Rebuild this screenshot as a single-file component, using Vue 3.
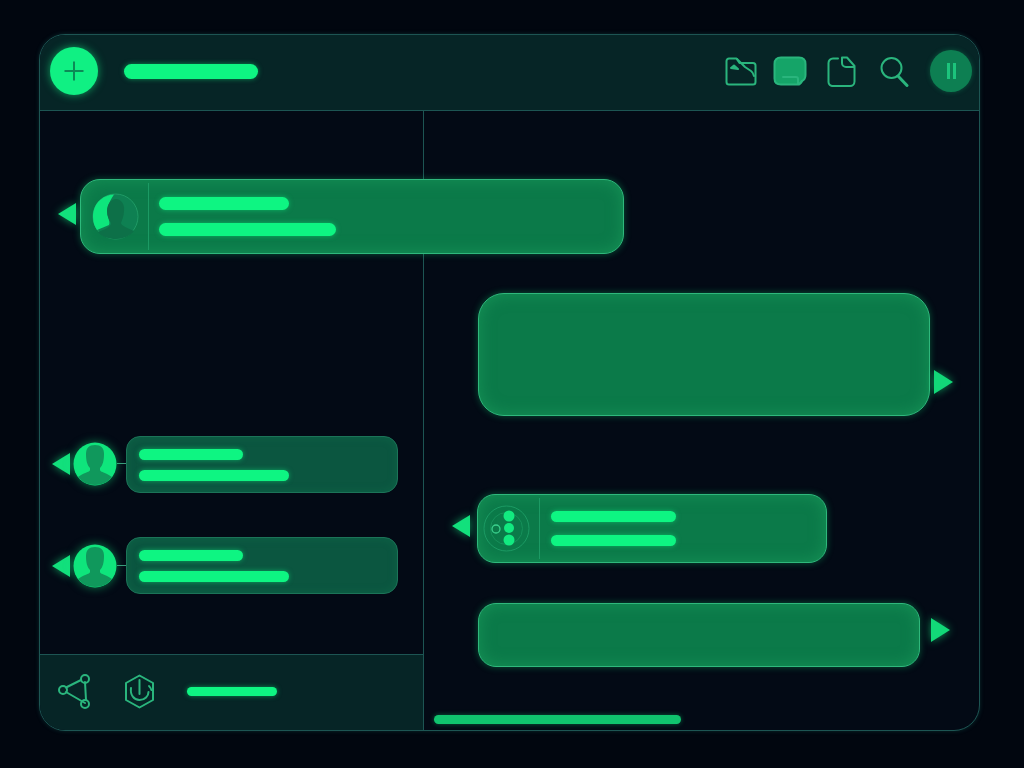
<script setup>
const people = [1, 2]
</script>

<template>
  <div class="page">
    <div class="frame">
      <header class="top">
        <button class="add">
          <svg width="22" height="22" viewBox="0 0 22 22"><path d="M11 1.500v19M1.500 11h19" class="plus" /></svg>
        </button>
        <span class="bar title"></span>
        <div class="tools">
          <svg class="ic" width="32" height="29" viewBox="0 0 32 29">
            <path d="M1.500 4a2.500 2.500 0 0 1 2.500-2.500h7.500l3 4.500H28a2.500 2.500 0 0 1 2.500 2.500V25a2.500 2.500 0 0 1-2.500 2.500H4A2.500 2.500 0 0 1 1.500 25z" />
            <path d="M12 2l8 8 6 4c1.500 1 2.500 3 3 5" />
            <path d="M6 11l3-2.500 4 3.500z" class="solid" />
          </svg>
          <svg class="ic" width="34" height="30" viewBox="0 0 34 30">
            <path d="M8 1.500h18c4 0 6.500 2.500 6.500 6.500v11c0 3-1 5-3.500 6l-3 3.500H8c-4 0-6.500-2-6.500-6V8C1.500 4 4 1.500 8 1.500z" class="fill" />
            <path d="M10 21h13c1.500 0 2 1 2 2v5M25 28c2 .5 3-.5 4-3" />
          </svg>
          <svg class="ic" width="29" height="31" viewBox="0 0 29 31">
            <path d="M11 2.500H6A4.500 4.500 0 0 0 1.500 7v19A4 4 0 0 0 6 30h17a4.500 4.500 0 0 0 4.500-4.500V10L20 1.500h-5" />
            <path d="M15 2v5a4 4 0 0 0 4 4h8" />
          </svg>
          <svg class="ic" width="29" height="31" viewBox="0 0 29 31">
            <circle cx="11.500" cy="12" r="10" />
            <path d="M18 20l9 9.500" class="thick" />
          </svg>
          <button class="pause"><i></i><i></i></button>
        </div>
      </header>

      <div class="body">
        <aside class="left">
          <div class="row first">
            <span class="arrow l up6"></span>
            <div class="bubble b1">
              <div class="cell c1">
                <svg width="47" height="47" viewBox="0 0 47 47">
                  <circle cx="23.500" cy="23.500" r="22.500" fill="#0e8052" stroke="#1f9a65" />
                  <path d="M22 1.500C10 2 1 11 1 24c0 6 2 10 4 13l12-5c1-2 0-5-1-8-2-6 0-14 6-22.500z" fill="#0ee67c" />
                  <path d="M15 18c0-7 4-12 9-12s9 5 8 12c0 5-2 9-3 12 0 3 7 5 13 8-4 5-11 8-18 8-7 0-14-2-18-7 7-3 13-5 13-9-2-3-4-7-4-12z" fill="#0d7048" />
                </svg>
              </div>
              <div class="lines l1">
                <span class="bar w130"></span>
                <span class="bar w177"></span>
              </div>
            </div>
          </div>

          <div v-for="n in people" :key="n" class="row second" :class="{ third: n === 2 }">
            <span class="arrow l small"></span>
            <svg class="person" width="44" height="44" viewBox="0 0 44 44">
              <circle cx="22" cy="22" r="21.500" fill="#0fe57c" />
              <path d="M13 12c0-6 3-9 9-9s9 3 9 9c0 6-1 11-4 14v2c0 2 7 3 12 7-4 5-10 8-17 8S9 40 5 35c5-4 12-5 12-7v-2c-3-3-4-8-4-14z" fill="#10985c" />
            </svg>
            <span class="tick"></span>
            <div class="bubble b2">
              <div class="lines l2">
                <span class="bar w104"></span>
                <span class="bar w150"></span>
              </div>
            </div>
          </div>

          <footer class="foot">
            <svg class="ic" width="33" height="35" viewBox="0 0 33 35">
              <path d="M8 13.500L23 6M8 18l19 11M27 8l1 18" />
              <circle cx="5" cy="16" r="4" />
              <circle cx="27" cy="5" r="4" />
              <circle cx="27" cy="30" r="4" />
            </svg>
            <svg class="ic hex" width="35" height="35" viewBox="0 0 35 35">
              <path d="M17.500 1.500L31 9v17L17.500 33.500 4 26V9z" />
              <path d="M17.500 6v14M9 14c-1 7 3 12 8.500 12s9-4 9-8" />
              <path d="M27 12l1.500 2M29 15l.5 1" />
            </svg>
            <span class="bar f"></span>
          </footer>
        </aside>

        <section class="right">
          <div class="row ra">
            <div class="bubble big"></div>
            <span class="arrow r a1"></span>
          </div>
          <div class="row rb">
            <span class="arrow l up5"></span>
            <div class="bubble b3">
              <div class="cell c3">
                <svg width="47" height="47" viewBox="0 0 47 47">
                  <circle cx="23.500" cy="23.500" r="22.500" fill="none" stroke="#1b9a63" />
                  <circle cx="23.500" cy="23.500" r="16" fill="none" stroke="#16905a" />
                  <circle cx="26" cy="11" r="5.500" fill="#12ea80" />
                  <circle cx="26" cy="23" r="5" fill="#12ea80" />
                  <circle cx="26" cy="35" r="5.500" fill="#12ea80" />
                  <circle cx="13" cy="24" r="4" fill="none" stroke="#3bd08d" stroke-width="1.300" />
                </svg>
              </div>
              <div class="lines l3">
                <span class="bar w125"></span>
                <span class="bar w125"></span>
              </div>
            </div>
          </div>
          <div class="row rc">
            <div class="bubble wide"></div>
            <span class="arrow r c"></span>
          </div>
          <span class="progress"></span>
        </section>
      </div>
    </div>
  </div>
</template>

<style>
html, body { margin: 0; background: #01060f; }
</style>

<style scoped>
.page {
  width: 1024px;
  height: 768px;
  padding: 34px 0 0 39px;
  box-sizing: border-box;
  background: #01060f;
  overflow: hidden;
}
.frame {
  width: 941px;
  height: 697px;
  box-sizing: border-box;
  border: 1px solid #1d5553;
  border-radius: 26px;
  background: #030a15;
  display: flex;
  flex-direction: column;
  box-shadow: 0 0 4px rgba(30, 110, 100, .35);
}
.top {
  height: 76px;
  flex: none;
  box-sizing: border-box;
  border-bottom: 1px solid #1d5553;
  border-radius: 25px 25px 0 0;
  background: #062526;
  display: flex;
  align-items: center;
  padding: 0 7px 3px 10px;
}
.add {
  width: 48px;
  height: 48px;
  padding: 0;
  border: 0;
  border-radius: 50%;
  background: #10f083;
  box-shadow: 0 0 9px rgba(16, 240, 131, .6);
  display: flex;
  align-items: center;
  justify-content: center;
}
.plus { stroke: #0c8a56; stroke-width: 2; fill: none; }
.bar {
  display: block;
  border-radius: 8px;
  background: #0ef582;
  box-shadow: 0 0 5px rgba(14, 245, 130, .5);
}
.title { width: 134px; height: 15px; margin-left: 26px; }
.tools {
  margin-left: auto;
  display: flex;
  align-items: center;
}
.ic { fill: none; stroke: #2ab57d; stroke-width: 2; stroke-linecap: round; stroke-linejoin: round; display: block; flex: none; }
.ic .solid { fill: #2ab57d; }
.ic .fill { fill: #15a468; }
.ic .thick { stroke-width: 3; }
.tools > svg:nth-child(2) { margin-left: 16px; }
.tools > svg:nth-child(3) { margin-left: 20px; }
.tools > svg:nth-child(4) { margin-left: 24px; }
.pause {
  width: 42px;
  height: 42px;
  margin-left: 21px;
  padding: 0;
  border: 0;
  border-radius: 50%;
  background: #0d7f52;
  box-shadow: 0 0 5px rgba(16, 180, 110, .35);
  display: flex;
  align-items: center;
  justify-content: center;
  gap: 3px;
}
.pause i { width: 3px; height: 16px; background: #1cc47c; }

.body { flex: 1; display: flex; min-height: 0; }
.left {
  width: 384px;
  flex: none;
  box-sizing: border-box;
  border-right: 1px solid #1d5553;
  display: flex;
  flex-direction: column;
}
.right { flex: 1; display: flex; flex-direction: column; }
.row { display: flex; align-items: center; flex: none; }

.arrow { display: block; flex: none; width: 0; height: 0; border-style: solid; border-color: transparent; filter: drop-shadow(0 0 4px rgba(16, 240, 131, .6)); }
.arrow.l { border-width: 11px 18px 11px 0; border-right-color: #12e07c; }
.arrow.r { border-width: 12px 0 12px 19px; border-left-color: #12d878; }
.up6 { margin-bottom: 6px; }
.up5 { margin-bottom: 5px; }

.bubble {
  box-sizing: border-box;
  flex: none;
  display: flex;
  align-items: center;
  border: 1px solid #2fb87c;
  background: #0b7a49;
  box-shadow: inset 0 0 16px rgba(34, 170, 100, .5), 0 0 7px rgba(16, 220, 120, .35);
}
.first { margin: 68px 0 0 18px; gap: 4px; }
.b1 { width: 544px; height: 75px; border-radius: 20px; padding-left: 11px; }
.cell { flex: none; display: flex; align-items: center; box-sizing: border-box; }
.c1 { width: 57px; height: 67px; border-right: 1px solid #1c9a64; margin-right: 10px; }
.lines { display: flex; flex-direction: column; }
.l1 { gap: 13px; }
.w130 { width: 130px; height: 13px; }
.w177 { width: 177px; height: 13px; }

.second { margin: 182px 0 0 12px; }
.second .arrow, .second .person, .second .tick { margin-bottom: 2px; }
.third { margin-top: 44px; }
.third .arrow, .third .person, .third .tick { margin-bottom: 0; }
.small { border-width: 11px 19px 11px 0; }
.person { margin-left: 3px; flex: none; filter: drop-shadow(0 0 5px rgba(16, 240, 131, .5)); }
.tick { width: 9px; height: 1px; background: #3a9a7a; flex: none; }
.b2 {
  width: 272px;
  height: 57px;
  border-radius: 14px;
  border-color: #1c7458;
  background: #0b5640;
  box-shadow: inset 0 0 10px rgba(20, 130, 85, .3);
  padding-left: 12px;
}
.l2 { gap: 10px; }
.w104 { width: 104px; height: 11px; }
.w150 { width: 150px; height: 11px; }

.foot {
  margin-top: auto;
  height: 76px;
  box-sizing: border-box;
  border-top: 1px solid #1d5553;
  border-radius: 0 0 0 25px;
  background: #062526;
  display: flex;
  align-items: center;
  padding: 0 0 2px 18px;
}
.hex { margin-left: 31px; }
.f { width: 90px; height: 9px; margin-left: 30px; }

.ra { margin: 182px 0 0 54px; gap: 4px; align-items: flex-end; }
.big { width: 452px; height: 123px; border-radius: 26px; }
.a1 { margin-bottom: 22px; }
.rb { margin: 78px 0 0 28px; gap: 7px; }
.b3 { width: 350px; height: 69px; border-radius: 18px; padding-left: 5px; }
.c3 { width: 57px; height: 61px; border-right: 1px solid #1c9a64; margin-right: 11px; }
.l3 { gap: 13px; }
.w125 { width: 125px; height: 11px; }
.rc { margin: 40px 0 0 54px; gap: 11px; }
.wide { width: 442px; height: 64px; border-radius: 18px; }
.c { border-width: 12px 0 12px 18px; margin-bottom: 10px; }
.progress {
  display: block;
  width: 247px;
  height: 9px;
  margin: 48px 0 0 10px;
  border-radius: 5px;
  background: #10c46e;
  box-shadow: 0 0 5px rgba(16, 200, 110, .45);
}
</style>
